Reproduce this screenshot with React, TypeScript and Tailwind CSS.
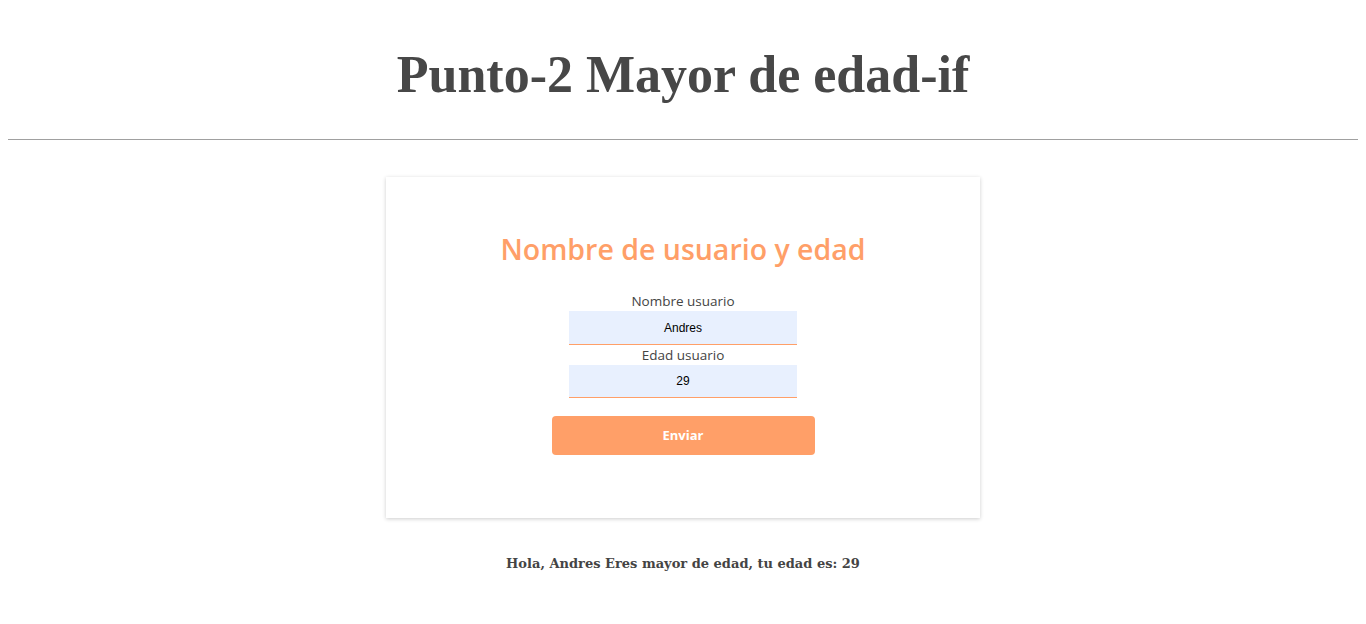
import { useState } from "react";

const App = () => {
  const [nombre, setNombre] = useState("Andres");
  const [edad, setEdad] = useState("29");

  return (
    <div className="min-h-screen bg-white px-2 pt-[1px]">
      <h1 className="mt-[38px] text-center font-['Liberation_Serif',serif] text-[52px] font-bold leading-[72px] text-[#474747]">
        Punto-2 Mayor de edad-if
      </h1>

      <hr className="mt-[28px] border-t border-[#a0a0a0]" />

      {/* Formulario */}
      <div className="mx-auto mt-[37px] flex h-[341px] w-[594px] flex-col items-center bg-white pt-[52px] shadow-[0_1px_4px_rgba(0,0,0,0.2)]">
        <h2 className="font-['Open_Sans',sans-serif] text-[28.5px] font-semibold leading-[40px] text-[#ff9f68]">
          Nombre de usuario y edad
        </h2>

        <label className="mt-[22px] font-['Open_Sans',sans-serif] text-[13.5px] font-normal leading-[20px] text-[#444]">
          Nombre usuario
        </label>
        <input
          type="text"
          className="h-[34px] w-[228px] border-b border-[#ff9f68] bg-[#e8f0fe] text-center font-['Liberation_Sans',sans-serif] text-[12px] text-black outline-none"
          value={nombre}
          onChange={(e) => setNombre(e.target.value)}
        />

        <label className="font-['Open_Sans',sans-serif] text-[13.5px] font-normal leading-[20px] text-[#444]">
          Edad usuario
        </label>
        <input
          type="text"
          className="h-[33px] w-[228px] border-b border-[#ff9f68] bg-[#e8f0fe] text-center font-['Liberation_Sans',sans-serif] text-[12px] text-black outline-none"
          value={edad}
          onChange={(e) => setEdad(e.target.value)}
        />

        <button className="mt-[18px] h-[39px] w-[263px] rounded-[4px] bg-[#ff9f68] font-['Open_Sans',sans-serif] text-[13px] font-bold text-white">
          Enviar
        </button>
      </div>

      <p className="mt-[36px] text-center font-['DejaVu_Serif',serif] text-[13px] font-bold text-[#444]">
        Hola, {nombre} Eres mayor de edad, tu edad es: {edad}
      </p>
    </div>
  );
};

export default App;
